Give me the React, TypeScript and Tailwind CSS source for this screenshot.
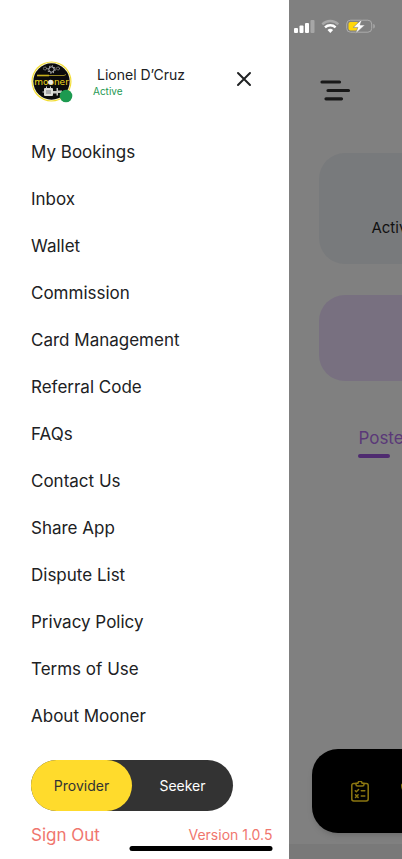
import React from "react";

const links = [
  "My Bookings",
  "Inbox",
  "Wallet",
  "Commission",
  "Card Management",
  "Referral Code",
  "FAQs",
  "Contact Us",
  "Share App",
  "Dispute List",
  "Privacy Policy",
  "Terms of Use",
  "About Mooner",
];

function Avatar() {
  return (
    <svg className="size-[42px] shrink-0" viewBox="0 0 42 42" role="img" aria-label="Mooner profile">
      <circle cx="20.5" cy="20.5" r="20" fill="#f2dc2e" />
      <circle cx="20.5" cy="20.5" r="18.9" fill="#fffbe0" />
      <circle cx="20.5" cy="20.5" r="18.2" fill="#0b0b0b" />
      <circle cx="20.5" cy="8.500" r="2.700" fill="none" stroke="#ddd" strokeWidth=".9" />
      <circle cx="20.5" cy="8.500" r="3.700" fill="none" stroke="#ddd" strokeWidth="1" strokeDasharray="1.2 1.700" />
      <circle cx="14" cy="7.5" r="1.5" fill="none" stroke="#bbb" strokeWidth=".9" strokeDasharray="1 .5" />
      <circle cx="27" cy="7.5" r="1.5" fill="none" stroke="#bbb" strokeWidth=".9" strokeDasharray="1 .5" />
      <path d="M6 13.700h12v1.6H6z" fill="#c9b21c" />
      <path d="M18 14.500h15l2-1" fill="none" stroke="#b9a529" strokeWidth=".8" />
      <text x="20.5" y="24" textAnchor="middle" fontSize="9" fontFamily="'DejaVu Sans', sans-serif" fill="#f0d820">
        mooner
      </text>
      <circle cx="19.500" cy="21.300" r="2.500" fill="#e9e9e9" />
      <rect x="13" y="27" width="9" height="8" rx="1" fill="#deded8" />
      <rect x="15" y="29" width="5" height="4" fill="#aaa" />
      <path d="M22 30h3.500v-3H27v2.500h4V32h-4v2.500h-1.500v-2H22z" fill="#c9c9c4" />
      <path d="M15.500 25.500v2m4-2v2M13.500 31h-2" stroke="#ccc" strokeWidth="1" />
      <circle cx="35" cy="35" r="6.3" fill="#1d9a50" />
    </svg>
  );
}

function StatusIcons() {
  return (
    <svg className="ml-1 h-4 w-[84px]" viewBox="0 0 84 16" aria-hidden="true">
      <g fill="#fff">
        <rect x="1" y="10" width="4" height="5" rx="1" />
        <rect x="6.500" y="7.500" width="4" height="7.500" rx="1" />
        <rect x="12" y="5" width="4" height="10" rx="1" />
        <rect x="17.500" y="2" width="4" height="13" rx="1" opacity=".3" />
      </g>
      <g fill="none" strokeWidth="2.400">
        <path d="M29.300 6.300a11.400 11.400 0 0 1 16 0" stroke="#a8a8a8" />
        <path d="M32 9.400a7.600 7.600 0 0 1 10.600 0" stroke="#fff" />
      </g>
      <path d="M34.500 12.100a4 4 0 0 1 5.600 0L37.300 15z" fill="#fff" />
      <rect x="53.700" y="2.200" width="25" height="12" rx="3.800" fill="none" stroke="#acacac" />
      <path d="M80.300 6v4.500c2-.6 2-3.900 0-4.500z" fill="#acacac" />
      <rect x="55.500" y="4" width="10" height="8.500" rx="2" fill="#ffd60a" />
      <path d="M69 1.200 60.200 9.400h4.700L62.400 15.800l9.500-8.800h-4.800z" fill="#fff" stroke="#808080" strokeWidth=".6" />
    </svg>
  );
}

function MenuIcon() {
  return (
    <svg className="h-[22px] w-8" viewBox="0 0 32 22" fill="none" stroke="#181818" strokeWidth="3.200" strokeLinecap="round" aria-hidden="true">
      <path d="M3 3h17.500M9 11.500h20.500M7 19.800h15.500" />
    </svg>
  );
}

function ClipboardIcon() {
  return (
    <svg className="h-[21px] w-[18px] shrink-0" viewBox="0 0 18 21" fill="none" stroke="#8b7610" strokeWidth="1.500" strokeLinecap="round" strokeLinejoin="round" aria-hidden="true">
      <path d="M5 2.500H2.700a1.900 1.900 0 0 0-1.900 1.900v13.700A1.900 1.900 0 0 0 2.700 20h12.600a1.900 1.900 0 0 0 1.900-1.900V4.400a1.900 1.900 0 0 0-1.900-1.900H13" />
      <path d="M5 2.200h2a2 2 0 0 1 4 0h2v1.300A1.500 1.500 0 0 1 11.500 5h-5A1.500 1.500 0 0 1 5 3.500z" />
      <path d="m4.300 9.800 1 1 2.300-2.300M10.300 9.800h3.500M4.500 13.800l2.600 2.600m0-2.600-2.600 2.600M10.300 15.100h3.500" />
    </svg>
  );
}

export default function App() {
  return (
    <div className="relative flex min-h-screen overflow-hidden bg-white font-['Inter','Liberation_Sans',sans-serif] text-[#202123]">
      <aside className="flex w-[72%] shrink-0 flex-col bg-white pt-[61px] pr-[17px] pl-[31px]">
        <header className="flex h-[42px] items-start">
          <Avatar />
          <div className="ml-5 flex flex-1 flex-col">
            <h1 className="pt-1 pl-1 text-sm leading-5">Lionel D’Cruz</h1>
            <p className="text-[10px] leading-3 text-[#269953]">Active</p>
          </div>
          <button type="button" aria-label="Close menu" className="mt-2 mr-[18px] flex size-5 items-center justify-center">
            <svg className="size-4" viewBox="0 0 16 16" stroke="#202224" strokeWidth="2" strokeLinecap="round" aria-hidden="true">
              <path d="m2 2 12 12M14 2 2 14" />
            </svg>
          </button>
        </header>

        <nav aria-label="Account" className="mt-[25px] flex flex-col">
          {links.map((label) => (
            <a key={label} href="#" className="flex h-[47px] items-center text-[17px] leading-6">
              {label}
            </a>
          ))}
        </nav>

        <div className="mt-[21px] flex h-[51px] w-[202px] shrink-0 rounded-full bg-[#333333] text-sm">
          <button type="button" aria-pressed="true" className="flex-1 rounded-full bg-[#ffdb2c] text-[#333]">
            Provider
          </button>
          <button type="button" aria-pressed="false" className="flex-1 rounded-full text-white">
            Seeker
          </button>
        </div>

        <footer className="mt-3 flex items-center justify-between text-[#f0766e]">
          <button type="button" className="text-[17px] leading-6">Sign Out</button>
          <span className="text-sm leading-6">Version 1.0.5</span>
        </footer>
      </aside>

      <main className="flex min-w-0 flex-1 flex-col overflow-hidden bg-[#808080] pt-[18px]">
        <StatusIcons />
        <button type="button" aria-label="Open menu" className="mt-[45px] ml-[30px] w-8">
          <MenuIcon />
        </button>
        <section className="mt-[52px] ml-[30px] flex h-[111px] w-64 shrink-0 items-end rounded-[26px] bg-[#787a7c] pb-6 pl-[52px] text-[15px] leading-6 text-[#111]">
          Active
        </section>
        <section className="mt-[31px] ml-[30px] h-[86px] w-64 shrink-0 rounded-[26px] bg-[#787080]" />
        <div className="mt-[45px] ml-[69px] flex flex-col text-[#5a3878]">
          <h2 className="text-[17px] leading-6">Posted</h2>
          <span className="mt-1 h-1 w-8 rounded-full bg-[#4f2b70]" />
        </div>
        <div className="mt-auto ml-[23px] flex h-[84px] w-80 shrink-0 items-center rounded-[26px] bg-black pl-[39px] shadow-md">
          <ClipboardIcon />
          <svg className="ml-8 h-5 w-5 shrink-0" viewBox="0 0 20 20" fill="#8b7610" aria-hidden="true">
            <path d="M0 4a3 3 0 0 1 3-2h14a3 3 0 0 1 3 2c0 6-4 10-10 15C4 14 0 10 0 4z" />
          </svg>
        </div>
        <div className="mt-[11px] h-[15px] shrink-0 bg-[#797979]" />
      </main>

      <div className="absolute bottom-2 left-1/2 h-[5px] w-[143px] -translate-x-1/2 rounded-full bg-black" />
    </div>
  );
}
